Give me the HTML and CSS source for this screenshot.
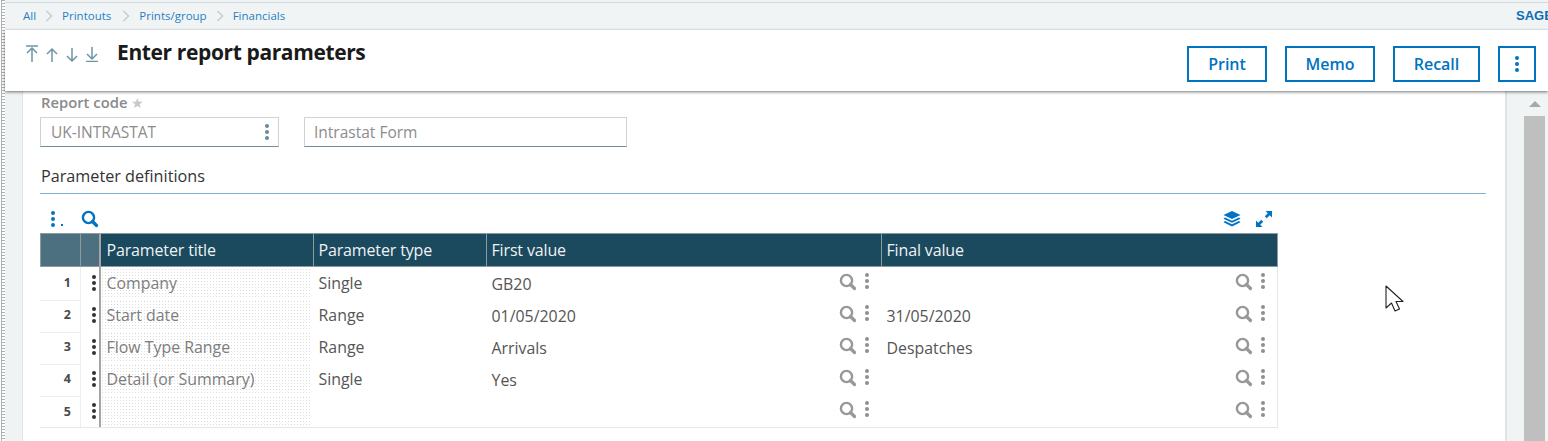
FILE: index.html
```html
<!DOCTYPE html>
<html lang="en">
<head>
<meta charset="utf-8">
<title>Enter report parameters</title>
<link rel="stylesheet" href="styles.css">
</head>
<body>
<svg class="defs" width="0" height="0" aria-hidden="true">
  <symbol id="mag" viewBox="0 0 18 18"><circle cx="7.5" cy="7.5" r="5.6" fill="none" stroke="currentColor" stroke-width="2.4"/><path d="M11.500 11.500l4 4" stroke="currentColor" stroke-width="3.200" stroke-linecap="round"/></symbol>
  <symbol id="dots" viewBox="0 0 6 18"><circle cx="3" cy="3" r="2"/><circle cx="3" cy="9" r="2"/><circle cx="3" cy="15" r="2"/></symbol>
</svg>
<div class="app">
  <div class="crumbs">
    <a>All</a><svg class="chev" viewBox="0 0 8 12"><path d="M1.500 1l5 5-5 5" fill="none" stroke="#c6cacc" stroke-width="1.400"/></svg>
    <a class="crumb-wide">Printouts</a><svg class="chev" viewBox="0 0 8 12"><path d="M1.500 1l5 5-5 5" fill="none" stroke="#c6cacc" stroke-width="1.400"/></svg>
    <a>Prints/group</a><svg class="chev" viewBox="0 0 8 12"><path d="M1.500 1l5 5-5 5" fill="none" stroke="#c6cacc" stroke-width="1.400"/></svg>
    <a>Financials</a>
    <span class="brand">SAGE</span>
  </div>
  <header class="head">
    <div class="nav">
      <svg viewBox="0 0 14 17" class="nav-i"><path d="M1 1h12M7 17V3M2 8l5-5 5 5" fill="none" stroke="#6f95a6" stroke-width="1.500"/></svg>
      <svg viewBox="0 0 14 17" class="nav-i"><path d="M7 17V4M2 9l5-5 5 5" fill="none" stroke="#6f95a6" stroke-width="1.500"/></svg>
      <svg viewBox="0 0 14 17" class="nav-i"><path d="M7 3v13M2 11l5 5 5-5" fill="none" stroke="#6f95a6" stroke-width="1.500"/></svg>
      <svg viewBox="0 0 14 17" class="nav-i"><path d="M7 2v12M2 9l5 5 5-5M1 16.500h12" fill="none" stroke="#6f95a6" stroke-width="1.500"/></svg>
    </div>
    <h1>Enter report parameters</h1>
    <div class="actions">
      <button class="btn btn-print">Print</button>
      <button class="btn btn-memo">Memo</button>
      <button class="btn btn-recall">Recall</button>
      <button class="btn btn-more"><svg class="more-dots"><use href="#dots"/></svg></button>
    </div>
  </header>
  <div class="body">
    <main class="panel">
      <div class="lbl">Report code <span class="star">★</span></div>
      <div class="fields">
        <div class="field f-code"><span>UK-INTRASTAT</span><svg class="f-dots"><use href="#dots"/></svg></div>
        <div class="field f-name"><span>Intrastat Form</span></div>
      </div>
      <h2>Parameter definitions</h2>
      <div class="tools">
        <svg class="t-dots"><use href="#dots"/></svg><span class="t-speck"></span>
        <svg class="t-mag"><use href="#mag"/></svg>
        <svg class="t-layers" viewBox="0 0 18 16"><path d="M9 0l8.500 4L9 8 .5 4z" fill="#0073c1"/><path d="M2 6.500L9 9.800l7-3.300 1.500 1.200L9 11.800.5 7.700z" fill="#0073c1"/><path d="M2 10L9 13.300l7-3.300 1.500 1.200L9 15.500.5 11.200z" fill="#0073c1"/></svg>
        <svg class="t-exp" viewBox="0 0 18 18"><path d="M10.500 1H17v6.500l-2.300-2.300-3 3-1.900-1.900 3-3zM7.500 17H1v-6.500l2.300 2.300 3-3 1.900 1.900-3 3z" fill="#0073c1"/></svg>
      </div>
      <div class="grid">
        <div class="th th-a"></div><div class="th th-a th-h"></div>
        <div class="th th-t">Parameter title</div><div class="th">Parameter type</div><div class="th">First value</div><div class="th">Final value</div>

        <div class="n">1</div><div class="h"><svg><use href="#dots"/></svg></div><div class="c t"><span>Company</span></div><div class="c">Single</div>
        <div class="c v"><span>GB20</span><svg class="m"><use href="#mag"/></svg><svg class="d"><use href="#dots"/></svg></div>
        <div class="c v"><span></span><svg class="m"><use href="#mag"/></svg><svg class="d"><use href="#dots"/></svg></div>

        <div class="n">2</div><div class="h"><svg><use href="#dots"/></svg></div><div class="c t"><span>Start date</span></div><div class="c">Range</div>
        <div class="c v"><span>01/05/2020</span><svg class="m"><use href="#mag"/></svg><svg class="d"><use href="#dots"/></svg></div>
        <div class="c v"><span>31/05/2020</span><svg class="m"><use href="#mag"/></svg><svg class="d"><use href="#dots"/></svg></div>

        <div class="n">3</div><div class="h"><svg><use href="#dots"/></svg></div><div class="c t"><span>Flow Type Range</span></div><div class="c">Range</div>
        <div class="c v"><span>Arrivals</span><svg class="m"><use href="#mag"/></svg><svg class="d"><use href="#dots"/></svg></div>
        <div class="c v"><span>Despatches</span><svg class="m"><use href="#mag"/></svg><svg class="d"><use href="#dots"/></svg></div>

        <div class="n">4</div><div class="h"><svg><use href="#dots"/></svg></div><div class="c t"><span>Detail (or Summary)</span></div><div class="c">Single</div>
        <div class="c v"><span>Yes</span><svg class="m"><use href="#mag"/></svg><svg class="d"><use href="#dots"/></svg></div>
        <div class="c v"><span></span><svg class="m"><use href="#mag"/></svg><svg class="d"><use href="#dots"/></svg></div>

        <div class="n n-last">5</div><div class="h"><svg><use href="#dots"/></svg></div><div class="c t"><span></span></div><div class="c"></div>
        <div class="c v"><span></span><svg class="m"><use href="#mag"/></svg><svg class="d"><use href="#dots"/></svg></div>
        <div class="c v"><span></span><svg class="m"><use href="#mag"/></svg><svg class="d"><use href="#dots"/></svg></div>
      </div>
    </main>
    <aside class="sbar">
      <div class="sbtrack">
        <div class="sbbtn"><span class="tri"></span></div>
        <div class="sbthumb"></div>
      </div>
    </aside>
  </div>
</div>
<svg class="cursor" viewBox="0 0 19 29"><path d="M1 1v22l5.500-5 3.500 8 4.500-2-3.500-7.500H18z" fill="#fff" stroke="#1c2228" stroke-width="1.100" stroke-linejoin="round"/></svg>
</body>
</html>
```
FILE: styles.css
```css
* { box-sizing: border-box; }
html, body { margin: 0; height: 100%; overflow: hidden; background: #fff; }
body { font-family: "Open Sans", "Liberation Sans", sans-serif; color: #555; position: relative; }
.defs { position: absolute; }
.app {
  height: 441px; margin-left: 5px; padding-top: 2px; display: flex; flex-direction: column;
  background: #eff3f4; position: relative;
}
body::before {
  content: ""; position: absolute; left: 1px; top: 0; bottom: 0; width: 4px;
  background: repeating-linear-gradient(#aeb2b4 0 1px, #fff 1px 3px);
  border-left: 1px solid #aeb2b4; border-right: 1px solid #aeb2b4;
}
.crumbs {
  height: 28px; flex: none; display: flex; align-items: center; padding: 0 0 2px 18px;
  border-top: 1px solid #cfdbe1; background: #f0f4f5; font-size: 11.500px; overflow: hidden;
}
.crumbs a { color: #2a7fc0; }
.crumbs .crumb-wide { margin-right: 2px; }
.chev { width: 8px; height: 12px; margin: 0 9px 0 9px; }
.brand { margin-left: auto; width: 32px; overflow: hidden; font-weight: 700; font-size: 13px; color: #0b6fb8; font-family: "Liberation Sans", sans-serif; flex: none; }
.head {
  height: 61px; flex: none; display: flex; align-items: flex-start; background: #fff; padding-left: 20px;
  box-shadow: 0 1px 3px rgba(0,0,0,.55); position: relative; z-index: 2;
}
.nav { display: flex; gap: 6px; margin-top: 15px; width: 92px; }
.nav-i { width: 14px; height: 17px; flex: none; }
h1 { margin: 6px 0 0 0; font-size: 21px; line-height: 32px; font-weight: 700; color: #1a1a1a; letter-spacing: -.38px; }
.actions { margin-left: auto; display: flex; margin-top: 16px; margin-right: 12px; }
.btn {
  height: 36px; background: #fff; border: 2px solid #0073c1; color: #0073c1; font: 600 16px "Open Sans", sans-serif;
  padding: 0; display: flex; align-items: center; justify-content: center;
}
.btn-print { width: 80px; margin-right: 18px; }
.btn-memo { width: 90px; margin-right: 18px; }
.btn-recall { width: 87px; margin-right: 18px; }
.btn-more { width: 38px; }
.more-dots { width: 6px; height: 18px; fill: #0073c1; }
.body { flex: 1; display: flex; min-height: 0; padding-left: 17px; }
.panel { flex: none; width: 1483px; background: #fff; border-left: 1px solid #dfe3e5; padding: 2px 0 0 17px; }
.lbl { font-size: 14.800px; line-height: 19px; font-weight: 600; color: #8a8a8a; padding-left: 1px; }
.star { color: #c8c8c8; font-size: 14px; font-weight: 400; }
.fields { display: flex; gap: 25px; margin-top: 5px; }
.field {
  height: 30px; display: flex; align-items: center; justify-content: space-between; font-size: 15.500px; color: #8c8c8c;
  border: 1px solid #cdd3d6; border-bottom: 1px solid #6d8d9c; padding: 0 8px 0 10px;
}
.f-code { width: 239px; }
.f-name { width: 323px; padding-left: 9px; }
.f-dots { width: 6px; height: 18px; fill: #668a9b; }
h2 {
  margin: 18px 19px 0 0; font-size: 16.200px; line-height: 22px; font-weight: 400; color: #333; padding: 0 0 6px 1px;
  border-bottom: 1px solid #7db4d6;
}
.tools { width: 1238px; height: 39px; display: flex; align-items: center; padding: 16px 5px 5px 10px; }
.t-dots { width: 6px; height: 18px; fill: #0073c1; }
.t-speck { width: 2px; height: 2px; background: #0073c1; margin: 12px 0 0 5px; align-self: center; }
.t-mag { width: 18px; height: 18px; color: #0073c1; margin-left: 18px; }
.t-layers { width: 18px; height: 16px; margin-left: auto; }
.t-exp { width: 18px; height: 18px; margin-left: 14px; }
.grid {
  width: 1238px; display: grid;
  grid-template-columns: 41px 20px 213px 173px 395px 396px;
  grid-template-rows: 34px repeat(5, 32px);
  border-bottom: 1px solid #e6e9ea; border-right: 1px solid #e6e9ea;
}
.th {
  background: #1b495e; color: #eef2f4; font-size: 16px; padding-left: 4.500px; display: flex; align-items: center;
  border: 1px solid #8b9b9f; border-width: 1px 1px 1px 0; letter-spacing: -.15px;
}
.th-a { background: #4d7080; }
.th-a:first-child { border-left: 1px solid #8b9b9f; }
.th-h { border-right: 2px solid #a5a5a5; }
.th-t { padding-left: 5.500px; }
.n {
  display: flex; align-items: center; justify-content: flex-end; padding: 0 9px 2px 0; margin-bottom: -2px; font-size: 12.500px; font-weight: 700; color: #4a4a4a;
  border-bottom: 1px solid #eceeef; border-right: 1px solid #eceeef;
}
.n-last { border-bottom: 0; margin-bottom: 0; padding-bottom: 0; }
.h { display: flex; align-items: center; justify-content: flex-start; padding-left: 10px; border-right: 2px solid #a5a5a5; }
.h svg { width: 6px; height: 18px; fill: #333; }
.c { display: flex; align-items: center; padding-left: 4.500px; font-size: 15.900px; color: #555; white-space: nowrap; }
.t {
  color: #7d7d7d; padding-left: 5.500px; margin-right: 4px; height: 30px; align-self: center;
  background-image: radial-gradient(#dcdcdc .7px, transparent .8px);
  background-size: 3px 3px;
}
.v { justify-content: flex-start; padding-right: 12px; }
.v span { flex: 1; padding-top: 1px; }
.m { width: 18px; height: 18px; color: #989898; margin: 0 7px 2px 0; flex: none; }
.d { width: 6px; height: 18px; fill: #8f8f8f; flex: none; margin-bottom: 4px; }
.sbar { flex: 1; background: #f0f4f5; border-left: 2px solid #dfe3e5; display: flex; justify-content: flex-end; padding-right: 3px; }
.sbtrack { width: 21px; display: flex; flex-direction: column; }
.sbbtn { height: 25px; flex: none; display: flex; align-items: center; justify-content: center; }
.tri { width: 0; height: 0; border-left: 6px solid transparent; border-right: 6px solid transparent; border-bottom: 6px solid #a8a8a8; }
.sbthumb { flex: 1; background: #bfbfbf; }
.cursor { position: absolute; left: 1385px; top: 285px; width: 19px; height: 29px; }
```
